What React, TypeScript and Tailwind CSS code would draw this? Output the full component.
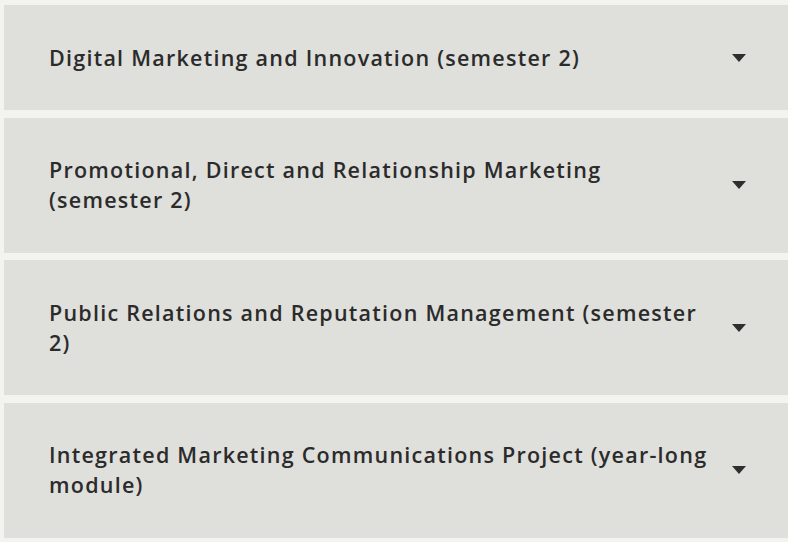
const modules = [
  'Digital Marketing and Innovation (semester 2)',
  'Promotional, Direct and Relationship Marketing (semester 2)',
  'Public Relations and Reputation Management (semester 2)',
  'Integrated Marketing Communications Project (year-long module)',
];

export default function App() {
  return (
    <div className="h-[542px] w-[788px] overflow-hidden bg-[#f3f3ef] pl-[4px] pt-[5px]">
      <div className="flex flex-col gap-[7.5px]">
        {modules.map((title) => (
          <button
            key={title}
            className="flex w-full items-center justify-between bg-[#dfdfdb] py-[37.5px] pl-[45px] pr-[42px] text-left"
          >
            <span
              className="w-[664px] text-[21.5px] font-semibold leading-[30px] tracking-[0.058em] text-[#2b2b2b]"
              style={{ fontFamily: '"Open Sans", sans-serif' }}
            >
              {title}
            </span>
            <svg width="14" height="8" viewBox="0 0 14 8" className="shrink-0">
              <path d="M0 0 H14 L7 8 Z" fill="#2f2f2f" />
            </svg>
          </button>
        ))}
      </div>
    </div>
  );
}
